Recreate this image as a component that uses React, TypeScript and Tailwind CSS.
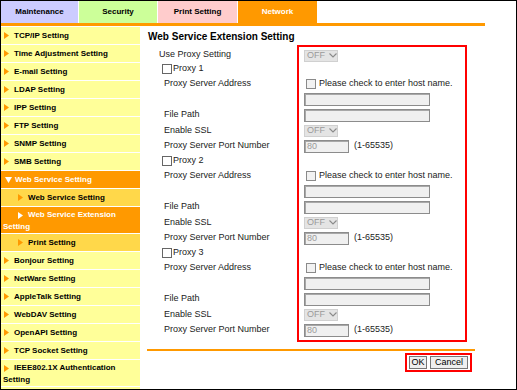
import React from 'react';

const ORANGE = '#ff9900';

type NavKind = 'top' | 'open' | 'sub' | 'active';

const navItems: { label: React.ReactNode; kind: NavKind; tall?: boolean }[] = [
  { label: 'TCP/IP Setting', kind: 'top' },
  { label: 'Time Adjustment Setting', kind: 'top' },
  { label: 'E-mail Setting', kind: 'top' },
  { label: 'LDAP Setting', kind: 'top' },
  { label: 'IPP Setting', kind: 'top' },
  { label: 'FTP Setting', kind: 'top' },
  { label: 'SNMP Setting', kind: 'top' },
  { label: 'SMB Setting', kind: 'top' },
  { label: 'Web Service Setting', kind: 'open' },
  { label: 'Web Service Setting', kind: 'sub' },
  { label: 'Web Service Extension', kind: 'active', tall: true },
  { label: 'Print Setting', kind: 'sub' },
  { label: 'Bonjour Setting', kind: 'top' },
  { label: 'NetWare Setting', kind: 'top' },
  { label: 'AppleTalk Setting', kind: 'top' },
  { label: 'WebDAV Setting', kind: 'top' },
  { label: 'OpenAPI Setting', kind: 'top' },
  { label: 'TCP Socket Setting', kind: 'top' },
  { label: 'IEEE802.1X Authentication', kind: 'top', tall: true },
];

function Arrow({ color }: { color: string }) {
  return (
    <svg width="5" height="7" viewBox="0 0 5 7" className="shrink-0 inline-block">
      <path d="M0 0L5 3.5L0 7Z" fill={color} />
    </svg>
  );
}

function NavItem({ label, kind, tall }: { label: React.ReactNode; kind: NavKind; tall?: boolean }) {
  const bg = kind === 'open' || kind === 'active' ? 'bg-[#ff9900] text-white' : kind === 'sub' ? 'bg-[#ffd84a] text-black' : 'bg-[#ffff99] text-black';
  const indent = kind === 'sub' || kind === 'active' ? 'pl-[17px]' : 'pl-[3px]';

  if (tall) {
    return (
      <div className={`${bg} h-[27px] border-b border-white pl-[2px] pt-[3px] leading-[10px]`}>
        <div className={`flex items-center ${kind === 'active' ? 'pl-[15px]' : 'pl-[1px]'} gap-[4px]`}>
          <Arrow color={kind === 'active' ? '#ffffff' : ORANGE} />
          <span className="ml-[1px]">{label}</span>
        </div>
        <div className="mt-[2px]">Setting</div>
      </div>
    );
  }

  return (
    <div className={`${bg} h-[18px] border-b border-white flex items-center ${indent}`}>
      {kind === 'open' ? (
        <svg width="7" height="6" viewBox="0 0 7 6" className="shrink-0 ml-[1px]">
          <path d="M0 0L7 0L3.5 6Z" fill="#ffffff" />
        </svg>
      ) : (
        <Arrow color={kind === 'active' ? '#ffffff' : ORANGE} />
      )}
      <span className={kind === 'open' ? 'ml-[3px]' : 'ml-[5px]'}>{label}</span>
    </div>
  );
}

function Select() {
  return (
    <div className="w-[34px] h-[12px] bg-[#e4e4e4] border border-[#d0d0d0] flex items-center pl-[2px] text-[#9a9a9a] leading-none">
      <span>OFF</span>
      <svg width="8" height="5" viewBox="0 0 8 5" className="ml-[4px]">
        <path d="M0.5 0.5L4 4L7.5 0.5" fill="none" stroke="#8a8a8a" strokeWidth="1.1" />
      </svg>
    </div>
  );
}

function TextBox({ w, value }: { w: string; value?: string }) {
  return (
    <div className={`${w} h-[13px] bg-[#f0f0f0] border border-[#8c8c8c] shadow-[inset_1px_1px_0_#a8a8a8] text-[#9a9a9a] leading-[11px] pl-[2px]`}>
      {value}
    </div>
  );
}

function Check({ light }: { light?: boolean }) {
  return (
    <span
      className={`inline-block shrink-0 w-[10px] h-[10px] border ${light ? 'border-[#8a8a8a] bg-[#f2f2f2]' : 'border-[#666] bg-white'}`}
    />
  );
}

const rowH = [15, 14, 15, 16, 16, 15, 16, 14, 15, 16, 16, 15, 16, 14, 15, 16, 16, 15, 16];

export default function App() {
  const labels: React.ReactNode[] = [<span className="pl-[12px]">Use Proxy Setting</span>];
  const fields: React.ReactNode[] = [<div className="pl-[5px] pt-[2px]"><Select /></div>];

  [1, 2, 3].forEach((n) => {
    labels.push(
      <span className="pl-[15px] flex items-center">
        <Check />
        <span className="ml-[1px]">Proxy {n}</span>
      </span>
    );
    fields.push(null);
    labels.push(<span className="pl-[17px]">Proxy Server Address</span>);
    fields.push(
      <div className="pl-[7px] flex items-center gap-[3px]">
        <Check light />
        <span className="text-[#222]">Please check to enter host name.</span>
      </div>
    );
    labels.push(null);
    fields.push(<div className="pl-[5px]"><TextBox w="w-[126px]" /></div>);
    labels.push(<span className="pl-[17px]">File Path</span>);
    fields.push(<div className="pl-[5px]"><TextBox w="w-[126px]" /></div>);
    labels.push(<span className="pl-[17px]">Enable SSL</span>);
    fields.push(<div className="pl-[5px]"><Select /></div>);
    labels.push(<span className="pl-[17px]">Proxy Server Port Number</span>);
    fields.push(
      <div className="pl-[5px] flex items-center">
        <TextBox w="w-[45px]" value="80" />
        <span className="ml-[5px] text-[#222]">(1-65535)</span>
      </div>
    );
  });

  return (
    <div className="w-[517px] h-[390px] border border-black bg-white overflow-hidden font-['Liberation_Sans',Arial,sans-serif]">
      <div className="flex gap-[1px] h-[22px] text-[8px] font-bold">
        <div className="w-[77px] bg-[#ccccff] flex items-center justify-center">Maintenance</div>
        <div className="w-[78px] bg-[#ccff99] flex items-center justify-center">Security</div>
        <div className="w-[79px] bg-[#ffcccc] flex items-center justify-center">Print Setting</div>
        <div className="w-[79px] bg-[#ff9900] text-white flex items-center justify-center">Network</div>
      </div>
      <div className="h-[3px] w-[484px] bg-[#ff9900]" />

      <div className="flex mt-[1px] h-[362px]">
        <nav className="w-[139px] bg-[#ffff99] text-[8px] font-bold">
          {navItems.map((it, i) => (
            <NavItem key={i} {...it} />
          ))}
        </nav>

        <main className="ml-[7px] w-[328px] text-[9px] text-[#222]">
          <h1 className="ml-[1px] mt-[4px] h-[14px] leading-[12px] text-[10px] font-bold text-black">
            Web Service Extension Setting
          </h1>

          <div className="flex">
            <div className="w-[150px] pt-[2px]">
              {labels.map((l, i) => (
                <div key={i} style={{ height: rowH[i] }} className="flex items-center">
                  {l}
                </div>
              ))}
            </div>
            <div className="w-[170px] border-2 border-[#ff0000] pb-[2px]">
              {fields.map((f, i) => (
                <div key={i} style={{ height: rowH[i] }} className="flex items-center">
                  {f}
                </div>
              ))}
            </div>
          </div>

          <div className="mt-[7px] h-[2px] bg-[#ff9900]" />
          <div className="flex justify-end mt-[2px] mr-[3px]">
            <div className="border-2 border-[#ff0000] flex gap-[3px] px-[2px] py-[1px]">
              <button className="w-[18px] h-[13px] bg-[#efefef] border border-[#767676] text-black leading-none text-[9px]">OK</button>
              <button className="w-[38px] h-[13px] bg-[#efefef] border border-[#767676] text-black leading-none text-[9px]">Cancel</button>
            </div>
          </div>
        </main>
      </div>
    </div>
  );
}
